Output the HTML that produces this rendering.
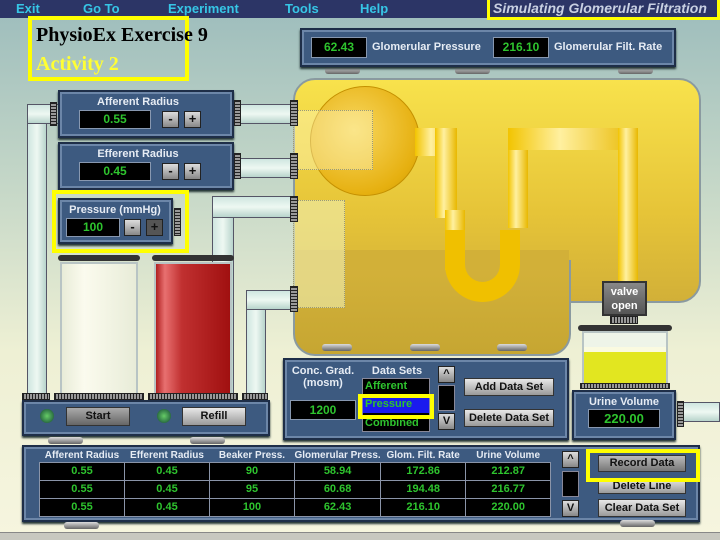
<!DOCTYPE html>
<html><head><meta charset="utf-8"><style>
*{margin:0;padding:0;box-sizing:border-box}
body{width:720px;height:540px;overflow:hidden;position:relative;font-family:"Liberation Sans",sans-serif;font-weight:bold;
background:linear-gradient(180deg,#9cbcbc 0%,#c6d8c8 35%,#eef0d4 65%,#f6f5df 100%)}
.a{position:absolute}
.menu{left:0;top:0;width:720px;height:18px;background:#2c3566}
.menu span{position:absolute;top:1px;color:#36c6e6;font-size:13px}
.panel{position:absolute;background:#3d5a80;border:2px solid #1e2e48;box-shadow:inset 0 0 0 2px #6c86a8,0 2px 2px #233}
.lbl{position:absolute;color:#e6ecf4;font-size:11px;text-align:center;white-space:nowrap}
.disp{position:absolute;background:#000;border:1px solid #8898b0;color:#2ec42e;font-size:12px;text-align:center}
.btn{position:absolute;background:linear-gradient(#e8e8e8,#9a9a9a);border:1px solid #333;color:#111;font-size:11px;text-align:center}
.sm{position:absolute;width:17px;height:17px;background:linear-gradient(#ddd,#888);border:1px solid #222;font-size:13px;text-align:center;line-height:14px;color:#111}
.tube{position:absolute;background:linear-gradient(90deg,#cfe6e0,#eef8f2,#b8d4cc);border:1px solid #556}
.tubeh{position:absolute;background:linear-gradient(180deg,#cfe6e0,#eef8f2,#b8d4cc);border:1px solid #556}
.conn{position:absolute;background:repeating-linear-gradient(90deg,#222 0 1px,#999 1px 3px);border:1px solid #222}
.connv{position:absolute;background:repeating-linear-gradient(180deg,#222 0 1px,#999 1px 3px);border:1px solid #222}
.foot{position:absolute;height:7px;background:linear-gradient(#ddd,#666);border-radius:3px}
.yb{position:absolute;border:4px solid #ffff00}
table{border-collapse:collapse;table-layout:fixed}
td{border:1px solid #8a94a8;color:#2ec42e;font-size:11px;text-align:center;height:18px;background:#000;width:85px;white-space:nowrap;overflow:hidden}
th{color:#e6ecf4;font-size:10px;height:12px;white-space:nowrap;font-weight:bold;width:85px;line-height:11px}
.ylw{position:absolute;background:linear-gradient(90deg,#f2c400,#fff0a0 40%,#e8b800);}
</style></head><body>
<div class="a menu"><span style="left:16px">Exit</span><span style="left:83px">Go To</span><span style="left:168px">Experiment</span><span style="left:285px">Tools</span><span style="left:360px">Help</span></div>
<div class="a" style="left:487px;top:0;width:233px;height:20px;border:3px solid #ffff00;border-top:none;background:#2c3566;color:#c8d0e2;font-style:italic;font-size:14px;padding:0 0 0 3px;line-height:16px">Simulating Glomerular Filtration</div>

<div class="tube" style="left:27px;top:104px;width:20px;height:320px"></div>
<div class="tubeh" style="left:27px;top:104px;width:32px;height:20px"></div>
<div class="tubeh" style="left:238px;top:104px;width:60px;height:20px"></div>
<div class="tubeh" style="left:238px;top:158px;width:60px;height:20px"></div>
<div class="tube" style="left:212px;top:196px;width:22px;height:228px"></div>
<div class="tubeh" style="left:212px;top:196px;width:86px;height:22px"></div>
<div class="tube" style="left:246px;top:290px;width:20px;height:134px"></div>
<div class="tubeh" style="left:246px;top:290px;width:52px;height:20px"></div>
<div class="tubeh" style="left:678px;top:402px;width:42px;height:20px"></div>

<div class="a" style="left:293px;top:78px;width:408px;height:225px;border:2px solid #8a9aa0;border-radius:22px;background:linear-gradient(#f8e24c,#e6c438 60%,#d2b038)"></div>
<div class="a" style="left:293px;top:260px;width:278px;height:96px;border:2px solid #8a9aa0;border-top:none;border-radius:0 0 22px 22px;background:linear-gradient(#d4b23a,#c6a632)"></div>
<div class="a" style="left:295px;top:250px;width:274px;height:20px;background:#d2b038"></div>
<div class="a" style="left:310px;top:86px;width:110px;height:110px;border-radius:50%;background:radial-gradient(circle at 40% 40%,#f8d860,#e6b010 70%,#c89800);border:1px solid #c49000"></div>
<div class="a" style="left:293px;top:110px;width:80px;height:60px;border:1px dotted #997;background:rgba(255,250,200,.4)"></div>
<div class="a" style="left:293px;top:200px;width:52px;height:108px;border:1px dotted #997;background:rgba(240,240,180,.6)"></div>
<div class="ylw" style="left:415px;top:128px;width:40px;height:28px"></div>
<div class="ylw" style="left:435px;top:128px;width:22px;height:90px"></div>
<div class="ylw" style="left:445px;top:210px;width:20px;height:60px"></div>
<div class="a" style="left:445px;top:230px;width:75px;height:72px;border:20px solid #f0c000;border-top:none;border-radius:0 0 38px 38px"></div>
<div class="ylw" style="left:508px;top:128px;width:20px;height:100px"></div>
<div class="ylw" style="left:508px;top:128px;width:130px;height:22px"></div>
<div class="ylw" style="left:618px;top:128px;width:20px;height:160px"></div>
<div class="a" style="left:602px;top:281px;width:45px;height:35px;background:linear-gradient(#888,#555);border:2px solid #333;color:#fff;font-size:11px;text-align:center;line-height:14px;padding-top:2px">valve<br>open</div>
<div class="foot" style="left:325px;top:67px;width:35px"></div>
<div class="foot" style="left:455px;top:67px;width:35px"></div>
<div class="foot" style="left:618px;top:67px;width:35px"></div>

<div class="panel" style="left:300px;top:28px;width:376px;height:39px"></div>
<div class="disp" style="left:311px;top:37px;width:56px;height:21px;line-height:19px">62.43</div>
<div class="lbl" style="left:372px;top:41px">Glomerular Pressure</div>
<div class="disp" style="left:493px;top:37px;width:56px;height:21px;line-height:19px">216.10</div>
<div class="lbl" style="left:554px;top:41px">Glomerular Filt. Rate</div>

<div class="yb" style="left:28px;top:16px;width:161px;height:65px"></div>
<div class="a" style="left:36px;top:21px;font-family:'Liberation Serif',serif;font-weight:bold;font-size:20px;line-height:29px;color:#000;white-space:nowrap">PhysioEx Exercise 9<br><span style="color:#ffff33">Activity 2</span></div>

<div class="panel" style="left:58px;top:90px;width:176px;height:48px"></div>
<div class="lbl" style="left:58px;top:96px;width:160px">Afferent Radius</div>
<div class="disp" style="left:79px;top:110px;width:72px;height:19px;line-height:17px">0.55</div>
<div class="sm" style="left:162px;top:111px">-</div><div class="sm" style="left:184px;top:111px">+</div>
<div class="connv" style="left:234px;top:100px;width:7px;height:26px"></div>
<div class="connv" style="left:50px;top:102px;width:7px;height:24px"></div>
<div class="panel" style="left:58px;top:142px;width:176px;height:48px"></div>
<div class="lbl" style="left:58px;top:148px;width:160px">Efferent Radius</div>
<div class="disp" style="left:79px;top:162px;width:72px;height:19px;line-height:17px">0.45</div>
<div class="sm" style="left:162px;top:163px">-</div><div class="sm" style="left:184px;top:163px">+</div>
<div class="connv" style="left:234px;top:153px;width:7px;height:26px"></div>
<div class="connv" style="left:290px;top:100px;width:8px;height:26px"></div>
<div class="connv" style="left:290px;top:153px;width:8px;height:26px"></div>
<div class="connv" style="left:290px;top:196px;width:8px;height:26px"></div>
<div class="connv" style="left:290px;top:286px;width:8px;height:26px"></div>

<div class="panel" style="left:58px;top:198px;width:115px;height:46px"></div>
<div class="lbl" style="left:60px;top:204px;width:110px">Pressure (mmHg)</div>
<div class="disp" style="left:66px;top:218px;width:54px;height:19px;line-height:17px">100</div>
<div class="sm" style="left:124px;top:219px">-</div><div class="sm" style="left:146px;top:219px;background:#555">+</div>
<div class="connv" style="left:174px;top:208px;width:7px;height:28px"></div>
<div class="yb" style="left:52px;top:190px;width:137px;height:63px"></div>

<div class="a" style="left:58px;top:255px;width:82px;height:6px;background:#333;border-radius:3px"></div>
<div class="a" style="left:60px;top:262px;width:78px;height:134px;background:linear-gradient(90deg,#e8ecd8,#fbfbee 30%,#e8ecd8);border:2px solid #b8c4c4"></div>
<div class="a" style="left:152px;top:255px;width:82px;height:6px;background:#333;border-radius:3px"></div>
<div class="a" style="left:154px;top:262px;width:78px;height:134px;background:linear-gradient(90deg,#b02020,#e87070 12%,#c03030 35%,#a01010);border:2px solid #b8c4c4"></div>
<div class="conn" style="left:22px;top:393px;width:28px;height:7px"></div>
<div class="conn" style="left:54px;top:393px;width:90px;height:7px"></div>
<div class="conn" style="left:148px;top:393px;width:90px;height:7px"></div>
<div class="conn" style="left:242px;top:393px;width:26px;height:7px"></div>

<div class="panel" style="left:22px;top:400px;width:248px;height:36px"></div>
<div class="a" style="left:40px;top:409px;width:14px;height:14px;border-radius:50%;background:radial-gradient(#6c6,#143)"></div>
<div class="btn" style="left:66px;top:407px;width:64px;height:19px;line-height:17px;background:linear-gradient(#aaa,#666)">Start</div>
<div class="a" style="left:157px;top:409px;width:14px;height:14px;border-radius:50%;background:radial-gradient(#6c6,#143)"></div>
<div class="btn" style="left:182px;top:407px;width:64px;height:19px;line-height:17px">Refill</div>
<div class="foot" style="left:48px;top:437px;width:35px"></div>
<div class="foot" style="left:190px;top:437px;width:35px"></div>

<div class="foot" style="left:322px;top:344px;width:30px"></div>
<div class="foot" style="left:410px;top:344px;width:30px"></div>
<div class="foot" style="left:497px;top:344px;width:30px"></div>
<div class="panel" style="left:283px;top:358px;width:286px;height:82px"></div>
<div class="lbl" style="left:288px;top:365px;width:70px">Conc. Grad.<br>(mosm)</div>
<div class="disp" style="left:290px;top:400px;width:66px;height:20px;line-height:18px">1200</div>
<div class="lbl" style="left:362px;top:365px;width:70px">Data Sets</div>
<div class="a" style="left:362px;top:378px;width:68px;height:54px;background:#000;border:1px solid #889"></div>
<div class="a" style="left:365px;top:380px;color:#2ec42e;font-size:11px">Afferent</div>
<div class="a" style="left:363px;top:398px;width:66px;height:15px;background:#1a1aee;color:#2ec42e;font-size:11px;padding-left:2px">Pressure</div>
<div class="a" style="left:365px;top:417px;color:#2ec42e;font-size:11px">Combined</div>
<div class="yb" style="left:358px;top:394px;width:76px;height:25px"></div>
<div class="sm" style="left:438px;top:366px;font-size:11px">^</div>
<div class="a" style="left:438px;top:385px;width:17px;height:26px;background:#000;border:1px solid #889"></div>
<div class="sm" style="left:438px;top:413px;font-size:11px">V</div>
<div class="btn" style="left:464px;top:378px;width:90px;height:18px;line-height:16px">Add Data Set</div>
<div class="btn" style="left:464px;top:409px;width:90px;height:18px;line-height:16px">Delete Data Set</div>

<div class="conn" style="left:610px;top:316px;width:28px;height:8px"></div>
<div class="a" style="left:578px;top:325px;width:94px;height:6px;background:#333;border-radius:3px"></div>
<div class="a" style="left:582px;top:331px;width:86px;height:54px;background:linear-gradient(#eef4e8 0 28%,#fafae0 28% 38%,#e2e620 38%);border:2px solid #b8c4c4"></div>
<div class="conn" style="left:580px;top:383px;width:90px;height:6px"></div>
<div class="panel" style="left:572px;top:390px;width:104px;height:50px"></div>
<div class="lbl" style="left:572px;top:396px;width:104px;font-size:11px">Urine Volume</div>
<div class="disp" style="left:588px;top:409px;width:72px;height:19px;line-height:17px;font-size:13px">220.00</div>
<div class="connv" style="left:677px;top:401px;width:7px;height:26px"></div>

<div class="panel" style="left:22px;top:445px;width:678px;height:77px"></div>
<div class="a" style="left:39px;top:450px">
<table>
<tr><th>Afferent Radius</th><th>Efferent Radius</th><th>Beaker Press.</th><th>Glomerular Press.</th><th>Glom. Filt. Rate</th><th>Urine Volume</th></tr>
<tr><td>0.55</td><td>0.45</td><td>90</td><td>58.94</td><td>172.86</td><td>212.87</td></tr>
<tr><td>0.55</td><td>0.45</td><td>95</td><td>60.68</td><td>194.48</td><td>216.77</td></tr>
<tr><td>0.55</td><td>0.45</td><td>100</td><td>62.43</td><td>216.10</td><td>220.00</td></tr>
</table></div>
<div class="sm" style="left:562px;top:451px;font-size:11px">^</div>
<div class="a" style="left:562px;top:471px;width:17px;height:26px;background:#000;border:1px solid #889"></div>
<div class="sm" style="left:562px;top:500px;font-size:11px">V</div>
<div class="btn" style="left:598px;top:455px;width:88px;height:17px;line-height:15px;background:linear-gradient(#bbb,#777)">Record Data</div>
<div class="btn" style="left:598px;top:478px;width:88px;height:16px;line-height:14px">Delete Line</div>
<div class="btn" style="left:598px;top:499px;width:88px;height:18px;line-height:16px">Clear Data Set</div>
<div class="yb" style="left:586px;top:449px;width:114px;height:33px"></div>
<div class="foot" style="left:64px;top:522px;width:35px"></div>
<div class="foot" style="left:620px;top:520px;width:35px"></div>
<div class="a" style="left:0;top:532px;width:720px;height:8px;background:#c8c8c0;border-top:1px solid #888"></div>
</body></html>
